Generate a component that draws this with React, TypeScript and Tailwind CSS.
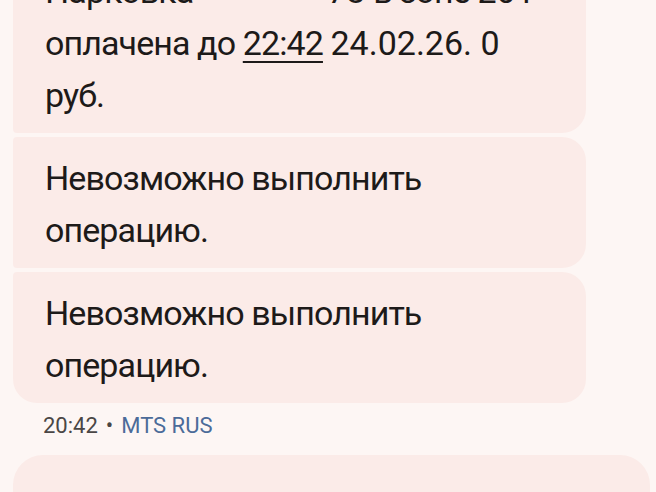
import React from "react";

const textFont = { fontFamily: "Roboto, 'Noto Sans', sans-serif" };

export default function App() {
  return (
    <div
      className="w-[656px] h-[492px] overflow-hidden bg-[#fdf6f4] pl-[13px]"
      style={textFont}
    >
      <div className="flex flex-col gap-[4px] -mt-[50px] w-[573px]">
        <div className="bg-[#fbebe8] rounded-tr-[24px] rounded-br-[24px] rounded-tl-[24px] rounded-bl-[4px] pl-[32px] pr-4 pt-[15px] pb-[12px] text-[34px] leading-[52px] tracking-[-0.9px] text-[#1d1a19]">
          <div className="whitespace-nowrap">
            Парковка<span className="inline-block w-[134px]"></span>
            <span className="tracking-normal">73</span> в зоне <span className="tracking-normal">201</span>
          </div>
          <div className="whitespace-nowrap">
            оплачена до{" "}
            <span className="underline decoration-2 underline-offset-[6px]">22:42</span>{" "}
            <span className="tracking-normal">24.02.26. 0</span>
          </div>
          <div className="whitespace-nowrap">руб.</div>
        </div>
        <div className="bg-[#fbebe8] rounded-tr-[24px] rounded-br-[24px] rounded-l-[4px] pl-[32px] pr-4 pt-[15px] pb-[12px] text-[34px] leading-[52px] tracking-[-0.9px] text-[#1d1a19]">
          <div className="whitespace-nowrap">Невозможно выполнить</div>
          <div className="whitespace-nowrap">операцию.</div>
        </div>
        <div className="bg-[#fbebe8] rounded-tr-[24px] rounded-br-[24px] rounded-tl-[4px] rounded-bl-[24px] pl-[32px] pr-4 pt-[15px] pb-[12px] text-[34px] leading-[52px] tracking-[-0.9px] text-[#1d1a19]">
          <div className="whitespace-nowrap">Невозможно выполнить</div>
          <div className="whitespace-nowrap">операцию.</div>
        </div>
      </div>
      <div className="mt-[9px] pl-[30px] text-[22px] leading-[28px] whitespace-nowrap">
        <span className="text-[#4a4645]">20:42</span>
        <span className="text-[#4a4645] mx-[8px]">•</span>
        <span className="text-[#4b6b99]">MTS RUS</span>
      </div>
      <div className="mt-[15px] w-[637px] h-[80px] bg-[#fbebe8] rounded-[30px]"></div>
    </div>
  );
}
